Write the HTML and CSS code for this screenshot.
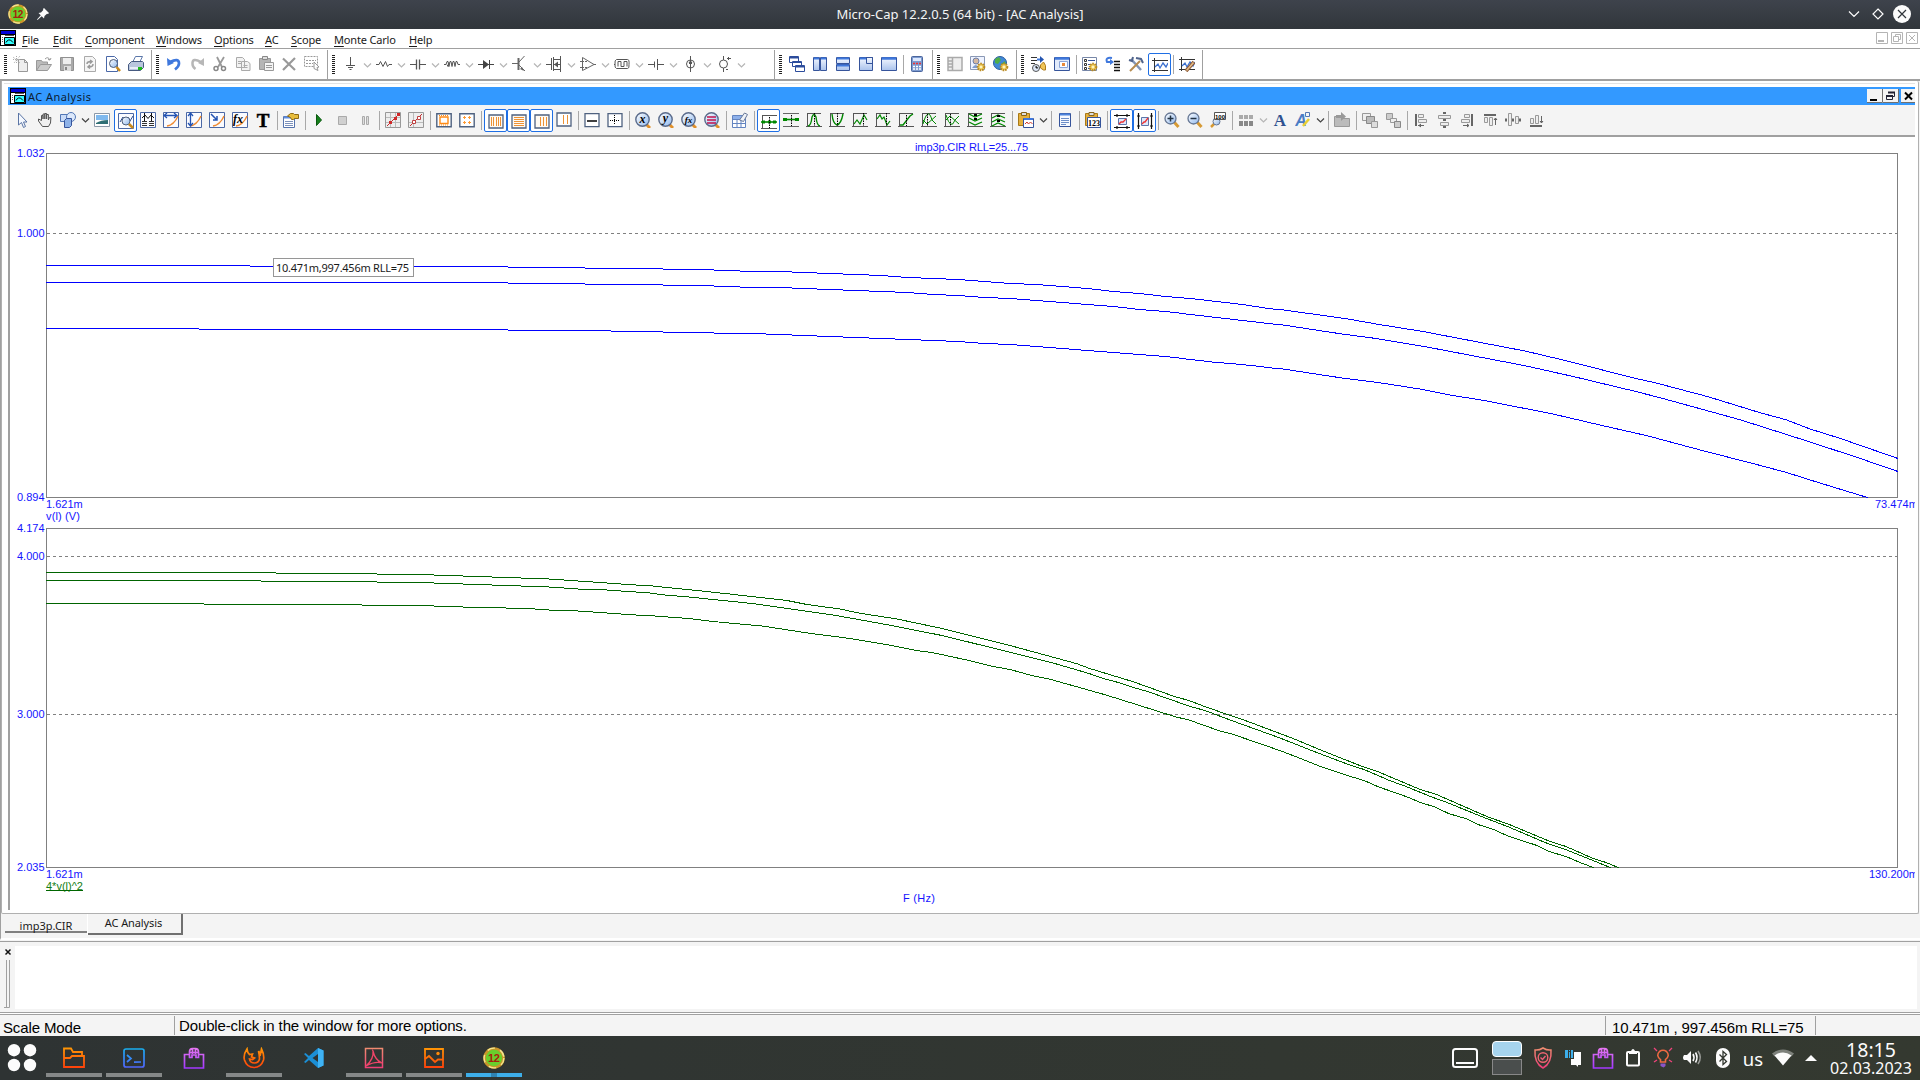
FILE: index.html
```html
<!DOCTYPE html>
<html lang="en">
<head>
<meta charset="utf-8">
<title>Micro-Cap 12.2.0.5 (64 bit) - [AC Analysis]</title>
<link rel="stylesheet" href="styles.css">
</head>
<body>
<svg class="sprite" aria-hidden="true">
<defs>
<linearGradient id="blue" x1="0" y1="0" x2="0" y2="1"><stop offset="0" stop-color="#f4f8ff"/><stop offset="1" stop-color="#a9c2ec"/></linearGradient>
<linearGradient id="lens" x1="0" y1="0" x2="1" y2="1"><stop offset="0" stop-color="#fff"/><stop offset="1" stop-color="#8fb8ee"/></linearGradient>
<linearGradient id="flame" gradientUnits="userSpaceOnUse" x1="0" y1="0" x2="0" y2="22"><stop offset="0" stop-color="#ff9a05"/><stop offset="1" stop-color="#ff3c0a"/></linearGradient>
<linearGradient id="sea" gradientUnits="userSpaceOnUse" x1="0" y1="0" x2="0" y2="22"><stop offset="0" stop-color="#13b5ee"/><stop offset="1" stop-color="#5560ff"/></linearGradient>
<linearGradient id="plum" gradientUnits="userSpaceOnUse" x1="0" y1="0" x2="0" y2="22"><stop offset="0" stop-color="#e97af0"/><stop offset="1" stop-color="#a035ff"/></linearGradient>
<linearGradient id="rose" gradientUnits="userSpaceOnUse" x1="0" y1="0" x2="0" y2="22"><stop offset="0" stop-color="#f09070"/><stop offset="1" stop-color="#ef3a78"/></linearGradient>
<symbol id="app" viewBox="0 0 20 20"><circle cx="10" cy="10" r="8.600" fill="#69cf2c" stroke="#c9952a" stroke-width="2.400"/><circle cx="10" cy="10" r="9" fill="none" stroke="#f3e58f" stroke-width="1.300" stroke-dasharray="7 5"/><text x="9.700" y="13.800" text-anchor="middle" class="app-num">12</text></symbol>
<symbol id="doc" viewBox="0 0 16 16"><path fill="#000" d="M0 0h16v16H0z"/><path fill="#0000d8" d="M1 1h14v3H1z"/><path fill="#fff" d="M1 5h14v10H1z"/><path stroke="#555" d="M2 7.500h1M2 9.500h1M2 11.500h1M5 5.500h9"/><path fill="#3ff" stroke="#000" d="M4.500 7.500h10v7h-10z"/><path d="M6 12.500q1-2 2.500-2.500h2l2.500 2.500" stroke="#000" fill="none"/></symbol>
<symbol id="new" viewBox="0 0 16 16"><path fill="#eee" stroke="#999" d="M5.500 3.500h6l3 3v9h-9z"/><path fill="none" stroke="#999" d="M11.500 3.500v3h3"/><path stroke="#aaa" stroke-dasharray="1 1" d="M0 1l7 6M7 0L1 7M3.500 0v7M0 3.500h7"/></symbol>
<symbol id="open" viewBox="0 0 16 16"><path fill="#bbb" stroke="#999" d="M.500 14.500v-10h5l1 1.500h5v3"/><path fill="#ccc" stroke="#999" d="M.500 14.500l4-6h11l-4 6z"/><path fill="none" stroke="#999" d="M9 3q3-3 5 1l1-2M14 4l-2-.5"/></symbol>
<symbol id="save" viewBox="0 0 16 16"><path fill="#aaa" stroke="#909090" d="M1.500 1.500h13v13h-13z"/><path fill="#eee" d="M4 2h8v6H4z"/><path fill="#ddd" d="M5 10h7v5H5z"/><path fill="#888" d="M6 11h2v3H6z"/></symbol>
<symbol id="reload" viewBox="0 0 16 16"><path fill="#f5f5f5" stroke="#aaa" d="M2.500.500h8l3 3v12h-11z"/><path fill="none" stroke="#999" stroke-width="1.500" d="M5 8q0-2.500 4-2.500M8 4l2 1.500L8 7.500M11 8q0 3-4 3M8 9l-2 2 2 1.500"/></symbol>
<symbol id="preview" viewBox="0 0 16 16"><path fill="#fff" stroke="#4a68a8" d="M1.500.500h8l3 3v12h-11z"/><circle cx="8.500" cy="7.500" r="4" fill="url(#lens)" stroke="#4a5a78"/><path stroke="#c98a1d" stroke-width="2.500" d="M11.500 11l3.500 4"/></symbol>
<symbol id="print" viewBox="0 0 16 16"><path fill="#fff" stroke="#5b77aa" d="M4.500 6.500l3-6h7l-3 6z"/><path fill="#b9c6dd" stroke="#465a80" d="M.500 8.500l3-3h11l1 1v5l-3 3h-12z"/><path fill="#e8eef8" d="M2 11h9v2H2z"/><path fill="#1db81d" d="M10 11h4v3h-4z"/></symbol>
<symbol id="undo" viewBox="0 0 16 16"><path fill="none" stroke="#3f78dd" stroke-width="2.700" d="M4 6q9-4.500 9 1.500 0 3-4 6"/><path fill="#3f78dd" d="M1 2l.500 8 6.500-3z"/></symbol>
<symbol id="redo" viewBox="0 0 16 16"><path fill="none" stroke="#b7b7b7" stroke-width="2.500" d="M12 6Q3 1 3.500 8q0 3 3 5"/><path fill="#b7b7b7" d="M15 2v8L9 7z"/></symbol>
<symbol id="cut" viewBox="0 0 16 16"><path fill="none" stroke="#999" stroke-width="1.800" d="M5 1l5 10M12 1L6 11"/><circle cx="4" cy="12.500" r="2" fill="none" stroke="#888" stroke-width="1.500"/><circle cx="11.500" cy="12.500" r="2" fill="none" stroke="#888" stroke-width="1.500"/></symbol>
<symbol id="copy" viewBox="0 0 16 16"><path fill="#f2f2f2" stroke="#aaa" d="M1.500 1.500h6l2 2v8h-8zM6.500 5.500h6l2.500 2v7H6.500z"/><path stroke="#aaa" d="M3 5.500h3M3 7.500h3M8.500 9.500h4M8.500 11.500h4"/></symbol>
<symbol id="paste" viewBox="0 0 16 16"><path fill="#b5b5b5" stroke="#999" d="M1.500 2.500h11v11h-11z"/><path fill="#ddd" stroke="#888" d="M4.500.500h5v3h-5z"/><path fill="#f4f4f4" stroke="#999" d="M6.500 6.500h9v8h-9z"/><path stroke="#999" d="M8 9.500h6M8 11.500h6"/></symbol>
<symbol id="del" viewBox="0 0 16 16"><path stroke="#999" stroke-width="2.200" d="M2 2.500l12 11.500M14 2L2 14"/></symbol>
<symbol id="sel" viewBox="0 0 16 16"><path fill="none" stroke="#999" stroke-dasharray="2 1" d="M.500.500h13v10H.500zM2 4.500h10M2 7.500h7"/><path fill="#fff" stroke="#999" d="M10 6l5 5-2 .5 1 3-2-1-2-1z"/></symbol>
<symbol id="gnd" viewBox="0 0 16 16"><path stroke="#555" d="M8.500 1v8M4 9.500h9M6 11.500h5M7.500 13.500h2"/></symbol>
<symbol id="res" viewBox="0 0 16 16"><path fill="none" stroke="#555" d="M0 8.500h3l1.500-3 2.500 5 2.500-5 2 5 1.500-2H16"/></symbol>
<symbol id="cap" viewBox="0 0 16 16"><path stroke="#555" d="M0 8.500h6M10 8.500h6"/><path stroke="#555" stroke-width="1.300" d="M6.500 3.500v10M9.500 3.500v10"/></symbol>
<symbol id="ind" viewBox="0 0 16 16"><path fill="none" stroke="#555" d="M0 8.500h2l1-3h1l1 5 1-5h1l1 5 1-5h1l1 5 1-5h1l1 3h2M3 8.500l1 2 1-4"/></symbol>
<symbol id="dio" viewBox="0 0 16 16"><path stroke="#444" d="M0 8.500h16M11.500 4v9"/><path fill="#444" d="M5 4v9l6-4.500z"/></symbol>
<symbol id="npn" viewBox="0 0 16 16"><path fill="none" stroke="#666" d="M0 7.500h6M12.500 0L7 6M7 9l6 6"/><path stroke="#666" stroke-width="2" d="M6.500 2v12"/><path fill="#666" d="M12 15l-4-2 2-2z"/></symbol>
<symbol id="mos" viewBox="0 0 16 16"><path fill="none" stroke="#555" d="M0 8.500h5M5.500 2v12M7.500 1v14M8 3.500h6M8 8.500h6M8 13.500h6M14.500 0v16"/><path fill="#555" d="M8 8.500l4-3v6z"/></symbol>
<symbol id="amp" viewBox="0 0 16 16"><path fill="none" stroke="#666" d="M2.500 1.500v13L14 8.500zM0 5.500h4M0 11.500h4M14 8.500h2M5 5.500h2M5 11.500h2"/></symbol>
<symbol id="pulse" viewBox="0 0 16 16"><path fill="none" stroke="#555" d="M2.500 3.500h11q2 0 1.500 5 .500 4-1.500 4h-11q-2-.500-1.500-4.500-.500-4 1.500-4.500M0 8.500h1M4 10.500v-5h3v5h3v-5h3v5"/></symbol>
<symbol id="bat" viewBox="0 0 16 16"><path stroke="#555" d="M0 8.500h6M10 8.500h6M6.500 5.500v6M9.500 3v11"/></symbol>
<symbol id="isrc" viewBox="0 0 16 16"><circle cx="8.500" cy="8" r="4" fill="none" stroke="#555"/><path stroke="#555" d="M8.500 0v16M7 7l1.500-2L10 7M7 7.500h3"/></symbol>
<symbol id="vsrc" viewBox="0 0 16 16"><circle cx="7.500" cy="8" r="4" fill="none" stroke="#555"/><path stroke="#555" d="M7.500 0v4M7.500 12v4M11 2.500h4M12.500 1v3M10 13.500h2"/></symbol>
<symbol id="cascade" viewBox="0 0 16 16"><g fill="#fff" stroke="#2c4c9c"><path d="M.500.500h9v6h-9zM3.500 5.500h9v5h-9zM6.500 9.500h9v6h-9z"/></g><path stroke="#2c4c9c" stroke-width="2" d="M1 1.500h8M4 6h8M7 10.500h8"/></symbol>
<symbol id="tilev" viewBox="0 0 16 16"><path fill="url(#blue)" stroke="#36549b" d="M1.500 1.500h6v13h-6zM8.500 1.500h6v13h-6z"/><path stroke="#3f78dd" stroke-width="2" d="M2 2.500h5M9 2.500h5"/></symbol>
<symbol id="tileh" viewBox="0 0 16 16"><path fill="url(#blue)" stroke="#36549b" d="M1.500 1.500h13v6h-13zM1.500 8.500h13v6h-13z"/><path stroke="#3f78dd" stroke-width="2" d="M2 2.500h12M2 9.500h12"/></symbol>
<symbol id="tilec" viewBox="0 0 16 16"><path fill="url(#blue)" stroke="#36549b" d="M1.500 1.500h13v13h-13zM8.500 1.500h6v6h-6z"/><path stroke="#3f78dd" stroke-width="2" d="M2 2.500h6"/></symbol>
<symbol id="win" viewBox="0 0 16 16"><path fill="url(#blue)" stroke="#36549b" d="M.500 1.500h15v13H.500z"/><path stroke="#3f78dd" stroke-width="2.500" d="M1 2.500h14"/></symbol>
<symbol id="calc" viewBox="0 0 16 16"><rect x="2.500" y=".5" width="11" height="15" rx="1" fill="#7d9bd0" stroke="#4a659c"/><path fill="#dce8ff" d="M4 2h8v3H4z"/><path stroke="#e33" stroke-width="1.500" stroke-dasharray="2 1" d="M4 7.500h8"/><path stroke="#fff" stroke-width="1.500" stroke-dasharray="2 1" d="M4 10.500h8M4 13h8"/></symbol>
<symbol id="panel" viewBox="0 0 16 16"><path fill="#eee" stroke="#aaa" stroke-width="1.500" d="M1 1.500h14v13H1zM5.500 2v12M1 5h4M1 8h4M1 11h4"/></symbol>
<symbol id="gear" viewBox="0 0 16 16"><circle cx="11" cy="11" r="3.300" fill="#f1cf60" stroke="#ba8a22" stroke-width="2" stroke-dasharray="1.600 .8"/><circle cx="11" cy="11" r="1.300" fill="#fff4c0"/></symbol>
<symbol id="imgcfg" viewBox="0 0 16 16"><path fill="#eef3ff" stroke="#8a98b5" d="M.500.500h14v13H.500z"/><circle cx="6" cy="5" r="3" fill="#d5b8a0" stroke="#6d7ea8"/><path fill="#7d9bd0" d="M2 12q4-6 7 0z"/><use href="#gear"/></symbol>
<symbol id="globe" viewBox="0 0 16 16"><circle cx="7" cy="7" r="6.500" fill="#4088d6" stroke="#2a5c9c"/><path fill="#4fae48" d="M2 3l4-2 2 3-3 4-3-1zM8 8l4-3 1 4-3 4z"/><use href="#gear"/></symbol>
<symbol id="check" viewBox="0 0 16 16"><path fill="#fff" stroke="#7787a8" d="M.500 1.500h14v13H.500z"/><path stroke="#36549b" d="M6 4.500h7M6 8.500h5M6 12.500h3"/><path fill="none" stroke="#333" d="M2.500 3.500h2v2h-2zM2.500 7.500h2v2h-2zM2.500 11.500h2v2h-2z"/><use href="#gear"/></symbol>
<symbol id="anim" viewBox="0 0 16 16"><path stroke="#333" d="M0 1.500h6M0 4.500h6M0 7.500h4"/><path stroke="#3f78dd" stroke-width="2" d="M6 3.500h4"/><path fill="#2454b0" d="M9 0l4 3.500L9 7z"/><circle cx="5" cy="12" r="3.500" fill="#dde8f8" stroke="#555"/><path stroke="#333" d="M5 10v2h2"/><path fill="#efc457" stroke="#ae7c1e" d="M9.500 9l3-3q3 3 2 8h-2l-3-2z"/></symbol>
<symbol id="dlg" viewBox="0 0 16 16"><path fill="#e2ebfb" stroke="#36549b" d="M.500 1.500h15v13H.500z"/><path stroke="#3f78dd" stroke-width="2.500" d="M1 2.500h14"/><path fill="#fff" stroke="#8ba5d8" d="M5.500 5.500h8v6h-8z"/><path fill="#e8893a" d="M8 7h3v3H8z"/></symbol>
<symbol id="step" viewBox="0 0 16 16"><path fill="none" stroke="#3f78dd" stroke-width="2" d="M7 2Q0 1 2 6h4"/><path fill="#3f78dd" d="M5 3l4 3-4 3z"/><path stroke="#111" stroke-width="1.300" d="M9 5.500h6M9 8.500h6M9 11.500h6M9 14.500h6"/></symbol>
<symbol id="tools" viewBox="0 0 16 16"><path stroke="#8295b5" stroke-width="2.500" d="M3 3l10 11"/><path stroke="#b68c50" stroke-width="2" d="M12 5L2 15"/><path fill="none" stroke="#50648c" stroke-width="2" d="M8 2l5 1 2 4M1 4l3 1 1-4"/></symbol>
<symbol id="wave" viewBox="0 0 16 16"><path stroke="#333" d="M2.500 1v14M0 3.500h16M0 13.500h16"/><path fill="none" stroke="#3b70d0" stroke-width="1.300" d="M3 10l3-3 2 4 3-5 3 4 2-4"/></symbol>
<symbol id="waveed" viewBox="0 0 16 16"><use href="#wave"/><path stroke="#8a5530" stroke-width="3.600" d="M7 15l8-9"/><path stroke="#e2bd8c" stroke-width="1.600" d="M7.500 14.500l7-8"/></symbol>
<symbol id="arrow" viewBox="0 0 16 16"><path fill="#f4f8ff" stroke="#5a74a4" d="M4.500 1v12l3-2.500 2 5 2-1-2-4.500H13z"/></symbol>
<symbol id="hand" viewBox="0 0 16 16"><path fill="#f0f0f0" stroke="#555" d="M5.500 14.500L1.500 9V7l3 1.500V3.500h1.500V7 2h1.800v5V1.500h1.800V7 2.500h1.800V8l1-2.500h1.500L13.500 11l-2 3.500z"/></symbol>
<symbol id="shapes" viewBox="0 0 16 16"><path fill="#cadbf7" stroke="#5277b5" d="M.500 2.500h8v7h-8z"/><circle cx="11" cy="5" r="4.500" fill="#dce8fb" stroke="#5277b5"/><path fill="#8eb2e8" stroke="#36549b" d="M4.500 8.500l2-2h5v7l-2 2h-5z"/></symbol>
<symbol id="pic" viewBox="0 0 16 16"><path fill="#fff" stroke="#8b98a8" d="M.500 1.500h15v13H.500z"/><path fill="#7fb9ee" d="M2 3h12v5H2z"/><path fill="#2f6f74" d="M2 11Q7 8 14 8v4H2z"/></symbol>
<symbol id="frame" viewBox="0 0 16 16"><path fill="#fafbff" stroke="#4b68a5" d="M.500.500h15v15H.500z"/></symbol>
<symbol id="scale" viewBox="0 0 16 16"><use href="#frame"/><path fill="none" stroke="#2a4c90" d="M2 9l3-5 2 4M10 4l2 4 3-5"/><circle cx="8" cy="8" r="4" fill="url(#lens)" stroke="#50607c"/><path stroke="#c98a1d" stroke-width="2.500" d="M11 11l4 4"/></symbol>
<symbol id="curs" viewBox="0 0 16 16"><use href="#frame"/><path fill="none" stroke="#111" d="M2 6l3-3 3 3.500L11 3l3 3M4.500 1v8M11.500 1v8"/><path stroke="#333" d="M2 9.500h5M9 9.500h5M2 11.500h5M9 11.500h5M2 13.500h5M9 13.500h5"/></symbol>
<symbol id="orange" viewBox="0 0 16 16"><use href="#frame"/><path fill="none" stroke="#ee8a32" stroke-width="1.400" d="M4 14q7-1 11-10"/></symbol>
<symbol id="hz" viewBox="0 0 16 16"><use href="#orange"/><path stroke="#2353b2" stroke-width="1.300" d="M1 3.500h13M4 1L1 3.500 4 6M11 1l3 2.500L11 6" fill="none"/></symbol>
<symbol id="vt" viewBox="0 0 16 16"><use href="#orange"/><path stroke="#2353b2" stroke-width="1.300" d="M4.500 1v13M2 4l2.500-3L7 4M2 11l2.500 3L7 11" fill="none"/></symbol>
<symbol id="pt" viewBox="0 0 16 16"><use href="#orange"/><path stroke="#2353b2" stroke-width="1.500" fill="none" d="M2 2l6 6M8 4v4H4"/></symbol>
<symbol id="fx" viewBox="0 0 16 16"><use href="#orange"/><text x="1" y="11" class="t-fx">fx</text></symbol>
<symbol id="T" viewBox="0 0 16 16"><text x="8" y="14.500" text-anchor="middle" class="t-T">T</text></symbol>
<symbol id="props" viewBox="0 0 16 16"><path fill="#fff" stroke="#5674ad" d="M.500 4.500h11v11h-11z"/><path stroke="#5f8de0" stroke-width="2" d="M1 5.500h10"/><path stroke="#7c91bb" d="M2 9.500h8M2 11.500h8M2 13.500h8"/><path fill="#e6bc3c" stroke="#8f6a12" d="M4.500 4l3-2.500h3l1 1h4v4h-4l-1 1h-2l-1-2z"/></symbol>
<symbol id="play" viewBox="0 0 16 16"><path fill="#16801b" stroke="#0a5a10" d="M5.500 2.500v11l5-5.500z"/></symbol>
<symbol id="stop" viewBox="0 0 16 16"><path fill="#d0d0d0" stroke="#aaa" d="M4.500 4.500h8v8h-8z"/></symbol>
<symbol id="pause" viewBox="0 0 16 16"><path fill="#ddd" stroke="#aaa" d="M5.500 4.500h2v8h-2zM9.500 4.500h2v8h-2z"/></symbol>
<symbol id="pts" viewBox="0 0 16 16"><path fill="#eee" stroke="#999" d="M.500.500h15v15H.500z"/><path stroke="#bbb" d="M5.500 1v14M1 10.500h14M10.500 1v14M1 5.500h14"/><path stroke="#c03030" d="M2 14L14 2"/><path fill="#d02828" d="M4 9h3v3H4zM9 5h3v3H9zM12 1h3v3h-3z"/></symbol>
<symbol id="ptso" viewBox="0 0 16 16"><path fill="#eee" stroke="#999" d="M.500.500h15v15H.500z"/><path stroke="#bbb" d="M5.500 1v14M1 10.500h14"/><path stroke="#c03030" d="M2 14L14 2"/><path fill="#fff" stroke="#c04040" d="M4.500 8.500h3v3h-3zM9.500 4.500h3v3h-3z"/></symbol>
<symbol id="box1" viewBox="0 0 16 16"><path fill="#fff" stroke="#4f6280" stroke-width="1.400" d="M.800 1.800h14.400v12.900H.800z"/><path fill="#fff" stroke="#ff8b16" stroke-width="1.400" d="M4 5h8v6.500H4z"/><path stroke="#ff8b16" stroke-dasharray="1 1" d="M3 3.500h10M3 13h10"/></symbol>
<symbol id="box2" viewBox="0 0 16 16"><path fill="#fff" stroke="#4f6280" stroke-width="1.400" d="M.800 1.800h14.400v12.900H.800z"/><path stroke="#ff9a33" d="M4 5.500h3M5.500 4v3M9 5.500h3M10.500 4v3M4 10.500h3M5.500 9v3M9 10.500h3M10.500 9v3"/></symbol>
<symbol id="bv" viewBox="0 0 16 16"><path fill="#fffaf2" stroke="#4f6280" stroke-width="1.300" d="M1 2h14v13H1z"/><path stroke="#ee9235" d="M3.500 4v9M5.500 4v9M8.500 4v9M10.500 4v9M12.500 4v9"/></symbol>
<symbol id="bh" viewBox="0 0 16 16"><path fill="#fffaf2" stroke="#4f6280" stroke-width="1.300" d="M1 2h14v13H1z"/><path stroke="#ee9235" d="M3 4.500h10M3 6.500h10M3 8.500h10M3 10.500h10M3 12.500h10"/></symbol>
<symbol id="bm" viewBox="0 0 16 16"><path fill="#fffaf2" stroke="#4f6280" stroke-width="1.300" d="M1 2h14v13H1z"/><path stroke="#ee9235" d="M6.500 4v9M9.500 4v9M12.500 4v9"/></symbol>
<symbol id="bn" viewBox="0 0 16 16"><path fill="#fff" stroke="#4f6280" stroke-width="1.300" d="M1 1h14v13H1z"/><path stroke="#ee9235" d="M7.500 3v9M11.500 3v9"/></symbol>
<symbol id="bl" viewBox="0 0 16 16"><path fill="#fff" stroke="#4f6280" stroke-width="1.300" d="M1 1.700h14v13H1z"/><path stroke="#000" stroke-width="1.500" d="M3 9h10"/></symbol>
<symbol id="bx" viewBox="0 0 16 16"><path fill="#fff" stroke="#4f6280" stroke-width="1.300" d="M1 1.700h14v13H1z"/><path stroke="#000" stroke-dasharray="1 1" d="M3 8.500h10M7.500 3v10"/></symbol>
<symbol id="mag" viewBox="0 0 16 16"><path stroke="#e0902b" stroke-width="3" d="M11 12l4 4"/><circle cx="7.500" cy="7.500" r="6.700" fill="url(#lens)" stroke="#5a6b8b" stroke-width="1.400"/></symbol>
<symbol id="mx" viewBox="0 0 16 16"><use href="#mag"/><text x="7.500" y="11" text-anchor="middle" class="t-m">x</text></symbol>
<symbol id="my" viewBox="0 0 16 16"><use href="#mag"/><text x="7.500" y="10" text-anchor="middle" class="t-m">y</text></symbol>
<symbol id="mf" viewBox="0 0 16 16"><use href="#mag"/><text x="7.500" y="11" text-anchor="middle" class="t-f">fx</text></symbol>
<symbol id="ml" viewBox="0 0 16 16"><use href="#mag"/><path stroke="#c3124c" stroke-width="1.600" d="M3 5h9M3 8h9M3 11h9"/></symbol>
<symbol id="clear" viewBox="0 0 16 16"><path fill="#fff" stroke="#6384c0" d="M.500 3.500h13v12H.500zM.500 7.500h13M.500 11.500h13M5 4v11M9 4v11"/><path fill="#8db0ea" d="M1 4h12v3H1z"/><path fill="#eef2f8" stroke="#697998" d="M7.500 8l5-7 3 1.500-4 7z"/></symbol>
<symbol id="ax" viewBox="0 0 16 16"><path fill="none" stroke="#555" d="M1.500 1v14M0 14.500h16M1 1.500h14"/></symbol>
<symbol id="g1" viewBox="0 0 16 16"><path fill="none" stroke="#555" d="M1.500 2v14M0 15.500h16M1 2.500h15"/><path stroke="#080" stroke-width="1.600" d="M0 9h16"/><path fill="#080" d="M1 7.500h3v3H1zM12 7.500h3v3h-3zM7 7.500h3v3H7z"/><path stroke="#000" stroke-dasharray="1.500 1" d="M8.500 4v11"/></symbol>
<symbol id="g2" viewBox="0 0 16 16"><path stroke="#666" d="M0 1.500h16M0 14.500h16"/><path stroke="#080" stroke-width="1.600" d="M0 7.500h16"/><path fill="#080" d="M0 6h4v3H0zM12 6h4v3h-4z"/><path stroke="#000" stroke-dasharray="1.500 1" d="M8.500 3v11"/></symbol>
<symbol id="g3" viewBox="0 0 16 16"><use href="#ax"/><path fill="none" stroke="#080" stroke-width="1.400" d="M2 14q3 0 4-9 2-5 4 0 1 9 4 9"/><path stroke="#000" stroke-dasharray="1.500 1" d="M8.500 1v13"/></symbol>
<symbol id="g4" viewBox="0 0 16 16"><use href="#ax"/><path fill="none" stroke="#080" stroke-width="1.400" d="M3 2q1 10 5 11 4-1 6-11"/><path stroke="#000" stroke-dasharray="1.500 1" d="M8.500 1v13"/></symbol>
<symbol id="g5" viewBox="0 0 16 16"><use href="#ax"/><path fill="none" stroke="#080" stroke-width="1.200" d="M2 12l3-4 3 4 4-9 3 5"/><path stroke="#000" stroke-dasharray="1.500 1" d="M11.500 1v13"/></symbol>
<symbol id="g6" viewBox="0 0 16 16"><use href="#ax"/><path fill="none" stroke="#080" stroke-width="1.200" d="M2 7l3-4 2 4 2-2 3 8 3-4"/><path stroke="#000" stroke-dasharray="1.500 1" d="M11.500 1v13"/></symbol>
<symbol id="g7" viewBox="0 0 16 16"><use href="#ax"/><path fill="none" stroke="#080" stroke-width="1.400" d="M2 13h3l7-9 3-2"/><path stroke="#000" stroke-dasharray="1.500 1" d="M8.500 3v11"/></symbol>
<symbol id="g8" viewBox="0 0 16 16"><use href="#ax"/><path fill="none" stroke="#080" d="M2 12q5-18 9-4l4 4M2 8l4 4 9-8"/><path stroke="#000" stroke-dasharray="1.500 1" d="M6.500 2v12"/></symbol>
<symbol id="g9" viewBox="0 0 16 16"><use href="#ax"/><path fill="none" stroke="#080" d="M2 3q5 16 9 5l4-4M2 8l4-4 9 8"/><path stroke="#000" stroke-dasharray="1.500 1" d="M6.500 2v12"/></symbol>
<symbol id="g10" viewBox="0 0 16 16"><use href="#ax"/><path fill="none" stroke="#080" stroke-width="1.200" d="M2 2l6 3 7-3M2 6l6 3 7-3M2 10l6 3 7-3"/><path fill="#000" d="M7 2h3v2H7zM7 6h3v2H7z"/></symbol>
<symbol id="g11" viewBox="0 0 16 16"><use href="#ax"/><path fill="none" stroke="#080" stroke-width="1.200" d="M2 6l6-3 7 3M2 10l6-3 7 3M2 14l6-3 7 3"/><path fill="#000" d="M7 3h3v2H7zM7 8h3v2H7z"/></symbol>
<symbol id="cpaste" viewBox="0 0 16 16"><path fill="#e5b03c" stroke="#a87918" d="M.500 1.500h11v12H.500z"/><path fill="#ddd" stroke="#876318" d="M3.500.500h5v3h-5z"/><path fill="#fff" stroke="#36549b" d="M5.500 6.500h10v9h-10z"/><path stroke="#3f78dd" stroke-width="2" d="M6 7h9"/><path fill="none" stroke="#d03a28" d="M7 12l2-2 1.500 2 2-2 2 2"/></symbol>
<symbol id="list" viewBox="0 0 16 16"><path fill="#f6f9ff" stroke="#36549b" d="M2.500 1.500h11v13h-11z"/><path stroke="#4c83dc" stroke-width="2" d="M3 2.500h10"/><path stroke="#6d8ec8" d="M4 6.500h8M4 8.500h8M4 10.500h8M4 12.500h5"/></symbol>
<symbol id="c123" viewBox="0 0 16 16"><path fill="#e5b03c" stroke="#a87918" d="M.500 1.500h12v12H.500z"/><path fill="#ddd" stroke="#876318" d="M4 .500h5v3H4z"/><path fill="#fff" stroke="#36549b" d="M2.500 5.500h13v10h-13z"/><text x="9" y="14" text-anchor="middle" class="t-n">123</text></symbol>
<symbol id="fith" viewBox="0 0 16 16"><path stroke="#111" stroke-width="1.200" d="M0 2.500h16M0 14.500h16M3 1v3M13 1v3M3 13v3M13 13v3"/><path fill="#dfe9fb" stroke="#5d76ab" d="M4.500 5.500h8v6h-8z"/><path fill="none" stroke="#e33" stroke-width="1.300" d="M5 11l2-2h2l3-3"/></symbol>
<symbol id="fitv" viewBox="0 0 16 16"><path stroke="#111" stroke-width="1.200" d="M1.500 0v16M14.500 0v16M0 3h3M0 13h3M13 3h3M13 13h3"/><path fill="#dfe9fb" stroke="#5d76ab" d="M4.500 4.500h7v8h-7z"/><path fill="none" stroke="#e33" stroke-width="1.300" d="M5 11l2-2h1l3-4"/></symbol>
<symbol id="zoom" viewBox="0 0 16 16"><path stroke="#d69a35" stroke-width="3" d="M10 10l4.500 5"/><circle cx="6.500" cy="6.500" r="5.500" fill="url(#lens)" stroke="#657693" stroke-width="1.300"/></symbol>
<symbol id="zin" viewBox="0 0 16 16"><use href="#zoom"/><path stroke="#234" stroke-width="1.500" d="M3.500 6.500h6M6.500 3.500v6"/></symbol>
<symbol id="zout" viewBox="0 0 16 16"><use href="#zoom"/><path stroke="#234" stroke-width="1.500" d="M3.500 6.500h6"/></symbol>
<symbol id="z100" viewBox="0 0 16 16"><path stroke="#d69a35" stroke-width="2.500" d="M4 12l-3 3"/><circle cx="6.500" cy="9.500" r="3.500" fill="url(#lens)" stroke="#657693"/><path fill="#fff" stroke="#555" d="M4.500.500h11v7h-11z"/><text x="10" y="6.500" text-anchor="middle" class="t-z">100</text></symbol>
<symbol id="grid" viewBox="0 0 16 16"><path fill="#aaa" d="M1 3h4v4H1zM6 3h4v4H6zM11 3h4v4h-4z"/><path fill="#888" d="M1 9h4v5H1zM6 9h4v5H6zM11 9h4v5h-4z"/></symbol>
<symbol id="A" viewBox="0 0 16 16"><text x="8" y="13.500" text-anchor="middle" class="t-A">A</text></symbol>
<symbol id="Aed" viewBox="0 0 16 16"><text x="6" y="13.500" text-anchor="middle" class="t-B">A</text><path fill="none" stroke="#5277b5" d="M10.500.500h4v4h-4z"/><path stroke="#e8cf35" stroke-width="2.500" d="M8 14l6-7"/></symbol>
<symbol id="gout" viewBox="0 0 16 16"><path fill="#bbb" stroke="#999" d="M.500 4.500h5l2 2h8v8H.500z"/><path fill="#999" d="M2 3h5V0l5 4.500L7 9V6H2z"/></symbol>
<symbol id="front" viewBox="0 0 16 16"><path fill="#eee" stroke="#999" d="M.500 1.500h8v7h-8z"/><path fill="#bbb" stroke="#888" d="M4.500 4.500h8v7h-8z"/><path fill="#ddd" stroke="#999" d="M9.500 9.500h6v6h-6z"/></symbol>
<symbol id="back" viewBox="0 0 16 16"><path fill="#ccc" stroke="#999" d="M1.500 1.500h6v6h-6z"/><path fill="#eee" stroke="#999" d="M5.500 6.500h6v4h-6z"/><path fill="#ccc" stroke="#888" d="M9.500 9.500h6v6h-6z"/></symbol>
<symbol id="al" viewBox="0 0 16 16"><path stroke="#666" stroke-width="2" d="M3 2v12"/><path fill="#eee" stroke="#999" d="M5.500 2.500h5v3h-5zM5.500 7.500h8v3h-8z"/><path stroke="#666" d="M5 13.500h6M8 12l-2 1.500L8 15"/></symbol>
<symbol id="ac" viewBox="0 0 16 16"><path stroke="#666" stroke-width="3" stroke-dasharray="2 5" d="M8.500 0v16"/><path fill="#eee" stroke="#999" d="M2.500 3.500h12v3h-12zM4.500 10.500h8v3h-8z"/></symbol>
<symbol id="ar" viewBox="0 0 16 16"><path stroke="#666" stroke-width="2" d="M13 2v12"/><path fill="#eee" stroke="#999" d="M5.500 2.500h5v3h-5zM2.500 7.500h8v3h-8z"/><path stroke="#666" d="M4 13.500h6M8 12l2 1.500L8 15"/></symbol>
<symbol id="at" viewBox="0 0 16 16"><path stroke="#666" stroke-width="2" d="M2 3h12"/><path fill="#eee" stroke="#999" d="M2.500 5.500h3v5h-3zM7.500 5.500h3v8h-3z"/><path stroke="#666" d="M13.500 6v7M12 8l1.500-2L15 8"/></symbol>
<symbol id="am" viewBox="0 0 16 16"><path stroke="#666" stroke-width="3" stroke-dasharray="2 5" d="M0 8h16"/><path fill="#eee" stroke="#999" d="M3.500 1.500h3v12h-3zM10.500 4.500h3v7h-3z"/></symbol>
<symbol id="ab" viewBox="0 0 16 16"><path stroke="#666" stroke-width="2" d="M2 14h12"/><path fill="#eee" stroke="#999" d="M2.500 6.500h3v5h-3zM7.500 3.500h3v8h-3z"/><path stroke="#666" d="M13.500 4v7M12 9l1.500 2L15 9"/></symbol>
<symbol id="cv" viewBox="0 0 11 16"><path fill="none" stroke="#b5b5b5" stroke-width="1.200" d="M2 6.500L5.500 10 9 6.500"/></symbol>
<symbol id="cvd" viewBox="0 0 11 16"><path fill="none" stroke="#444" stroke-width="1.200" d="M2 6.500L5.500 10 9 6.500"/></symbol>
<symbol id="bag" viewBox="0 0 22 22"><g fill="none" stroke="url(#plum)" stroke-width="1.700"><path d="M6 7.500H1.500V21h19V7.500H16M6.500 10.500V5q0-3.500 3-3.500h3q3 0 3 3.500v5.500H13V8H9v2.500zM9.500 2v5M12.500 2v5M7 5.500h8"/></g></symbol>
</defs>
</svg>

<header class="titlebar">
  <svg class="t-app" viewBox="0 0 20 20"><use href="#app"/></svg>
  <svg class="t-pin" viewBox="0 0 12 12"><path fill="#fcfcfc" d="M7 0l5 5-1 1-1-.3L7.500 8 7 10.500 4.700 8.200.5 12 0 11.500l3.800-4.200L1.500 5 4 4.500 6.300 2 6 1z"/></svg>
  <h1>Micro-Cap 12.2.0.5 (64 bit) - [AC Analysis]</h1>
  <svg class="t-ctl" viewBox="0 0 70 20"><g fill="none" stroke="#fcfcfc" stroke-width="1.200"><path d="M5 7.500l5 5 5-5M34 5l5 5-5 5-5-5z"/></g><circle cx="58" cy="10" r="9" fill="#fcfcfc"/><path stroke="#31363b" stroke-width="1.200" d="M54 6l8 8M62 6l-8 8"/></svg>
</header>

<nav class="menubar">
  <svg class="doc" viewBox="0 0 16 16"><use href="#doc"/></svg>
  <ul>
    <li class="m1"><u>F</u>ile</li><li class="m2"><u>E</u>dit</li><li class="m3"><u>C</u>omponent</li><li class="m4"><u>W</u>indows</li><li class="m5"><u>O</u>ptions</li><li class="m6"><u>A</u>C</li><li class="m7"><u>S</u>cope</li><li class="m8"><u>M</u>onte Carlo</li><li><u>H</u>elp</li>
  </ul>
  <div class="mdi-ctl"><svg viewBox="0 0 42 12"><g fill="none" stroke="#b4b4b4"><path d="M.500.500h11v11H.500zM15.500.500h11v11h-11zM30.500.500h11v11h-11z"/><path stroke-width="2" d="M2 9h6"/><path d="M17.500 4.500h5v5h-5zM19.500 4.500v-2h5v5h-2M33 3l6 6M39 3l-6 6"/></g></svg></div>
</nav>

<div class="toolbar main">
  <div class="seg s1"><i class="grip"></i><svg class="i"><use href="#new"/></svg><svg class="i"><use href="#open"/></svg><svg class="i"><use href="#save"/></svg><svg class="i"><use href="#reload"/></svg><svg class="i"><use href="#preview"/></svg><svg class="i"><use href="#print"/></svg></div>
  <div class="seg s2"><i class="grip"></i><svg class="i"><use href="#undo"/></svg><svg class="i"><use href="#redo"/></svg><svg class="i"><use href="#cut"/></svg><svg class="i"><use href="#copy"/></svg><svg class="i"><use href="#paste"/></svg><svg class="i"><use href="#del"/></svg><svg class="i"><use href="#sel"/></svg></div>
  <div class="seg s3"><i class="grip"></i><svg class="i"><use href="#gnd"/></svg><svg class="c"><use href="#cv"/></svg><svg class="i"><use href="#res"/></svg><svg class="c"><use href="#cv"/></svg><svg class="i"><use href="#cap"/></svg><svg class="c"><use href="#cv"/></svg><svg class="i"><use href="#ind"/></svg><svg class="c"><use href="#cv"/></svg><svg class="i"><use href="#dio"/></svg><svg class="c"><use href="#cv"/></svg><svg class="i"><use href="#npn"/></svg><svg class="c"><use href="#cv"/></svg><svg class="i"><use href="#mos"/></svg><svg class="c"><use href="#cv"/></svg><svg class="i"><use href="#amp"/></svg><svg class="c"><use href="#cv"/></svg><svg class="i"><use href="#pulse"/></svg><svg class="c"><use href="#cv"/></svg><svg class="i"><use href="#bat"/></svg><svg class="c"><use href="#cv"/></svg><svg class="i"><use href="#isrc"/></svg><svg class="c"><use href="#cv"/></svg><svg class="i"><use href="#vsrc"/></svg><svg class="c"><use href="#cv"/></svg></div>
  <div class="seg s4"><i class="grip"></i><svg class="i"><use href="#cascade"/></svg><svg class="i"><use href="#tilev"/></svg><svg class="i"><use href="#tileh"/></svg><svg class="i"><use href="#tilec"/></svg><svg class="i"><use href="#win"/></svg><i class="sep"></i><svg class="i"><use href="#calc"/></svg></div>
  <div class="seg s5"><i class="grip"></i><svg class="i"><use href="#panel"/></svg><svg class="i"><use href="#imgcfg"/></svg><svg class="i"><use href="#globe"/></svg></div>
  <div class="seg s6"><i class="grip"></i><svg class="i"><use href="#anim"/></svg><svg class="i"><use href="#dlg"/></svg><i class="sep"></i><svg class="i"><use href="#check"/></svg><svg class="i"><use href="#step"/></svg><svg class="i"><use href="#tools"/></svg><svg class="i on"><use href="#wave"/></svg><i class="sep"></i><svg class="i"><use href="#waveed"/></svg></div>
</div>

<main class="mdi">
  <section class="window">
    <div class="caption"><svg class="doc" viewBox="0 0 16 16"><use href="#doc"/></svg><h2>AC Analysis</h2>
      <svg class="cap-ctl" viewBox="0 0 48 14"><path fill="#f4f4f4" d="M0 0h16v14H0zM16 0h16v14H16zM34 0h14v14H34z"/><path fill="none" stroke="#707070" d="M0 13.500h15.500V0M16 13.500h15.500V0M34 13.500h14"/><path fill="none" stroke="#000" stroke-width="2" d="M3 11h7M38 3.500l7 7M45 3.500l-7 7"/><path fill="#f4f4f4" stroke="#223" d="M21.500 4v-.500h6v4h-2M19.500 6.500h6v4h-6z"/><path stroke="#223" stroke-width="2" d="M21 3.500h7M19 7h7"/></svg>
    </div>
    <div class="toolbar local">
      <svg class="i"><use href="#arrow"/></svg><svg class="i"><use href="#hand"/></svg><svg class="i"><use href="#shapes"/></svg><svg class="c"><use href="#cvd"/></svg><svg class="i"><use href="#pic"/></svg><svg class="i on"><use href="#scale"/></svg><svg class="i"><use href="#curs"/></svg><svg class="i"><use href="#hz"/></svg><svg class="i"><use href="#vt"/></svg><svg class="i"><use href="#pt"/></svg><svg class="i"><use href="#fx"/></svg><svg class="i"><use href="#T"/></svg><i class="sep"></i><svg class="i"><use href="#props"/></svg><i class="sep"></i><svg class="i"><use href="#play"/></svg><svg class="i"><use href="#stop"/></svg><svg class="i"><use href="#pause"/></svg><i class="sep"></i><svg class="i"><use href="#pts"/></svg><svg class="i"><use href="#ptso"/></svg><i class="sep"></i><svg class="i"><use href="#box1"/></svg><svg class="i"><use href="#box2"/></svg><i class="sep"></i><svg class="i on"><use href="#bv"/></svg><svg class="i on"><use href="#bh"/></svg><svg class="i on"><use href="#bm"/></svg><svg class="i"><use href="#bn"/></svg><i class="sep"></i><svg class="i"><use href="#bl"/></svg><svg class="i"><use href="#bx"/></svg><i class="sep"></i><svg class="i"><use href="#mx"/></svg><svg class="i"><use href="#my"/></svg><svg class="i"><use href="#mf"/></svg><svg class="i"><use href="#ml"/></svg><i class="sep"></i><svg class="i"><use href="#clear"/></svg><i class="sep"></i><svg class="i on"><use href="#g1"/></svg><svg class="i"><use href="#g2"/></svg><svg class="i"><use href="#g3"/></svg><svg class="i"><use href="#g4"/></svg><svg class="i"><use href="#g5"/></svg><svg class="i"><use href="#g6"/></svg><svg class="i"><use href="#g7"/></svg><svg class="i"><use href="#g8"/></svg><svg class="i"><use href="#g9"/></svg><svg class="i"><use href="#g10"/></svg><svg class="i"><use href="#g11"/></svg><i class="sep"></i><svg class="i"><use href="#cpaste"/></svg><svg class="c"><use href="#cvd"/></svg><i class="sep"></i><svg class="i"><use href="#list"/></svg><i class="sep"></i><svg class="i"><use href="#c123"/></svg><i class="sep"></i><svg class="i on"><use href="#fith"/></svg><svg class="i on"><use href="#fitv"/></svg><i class="sep"></i><svg class="i"><use href="#zin"/></svg><svg class="i"><use href="#zout"/></svg><svg class="i"><use href="#z100"/></svg><i class="sep"></i><svg class="i"><use href="#grid"/></svg><svg class="c"><use href="#cv"/></svg><svg class="i"><use href="#A"/></svg><svg class="i"><use href="#Aed"/></svg><svg class="c"><use href="#cvd"/></svg><i class="sep"></i><svg class="i"><use href="#gout"/></svg><i class="sep"></i><svg class="i"><use href="#front"/></svg><svg class="i"><use href="#back"/></svg><i class="sep"></i><svg class="i"><use href="#al"/></svg><svg class="i"><use href="#ac"/></svg><svg class="i"><use href="#ar"/></svg><svg class="i"><use href="#at"/></svg><svg class="i"><use href="#am"/></svg><svg class="i"><use href="#ab"/></svg>
    </div>
    <div class="plots">
      <svg class="chart" viewBox="10 137 1905 773">
        <g class="axes"><path d="M46.500 153.500H1897.500V497.500H46.500zM46.500 528.500H1897.500V867.500H46.500z"/><path class="dash" d="M47 233.500H1897M47 556.500H1897M47 714.500H1897"/></g>
        <g class="trace v">
          <path d="M46 265.500H250M250 266.500H508M508 267.500H585M585 268.500H663M663 269.500H714M714 270.500H740M740 271.500H792M792 272.500H817M817 273.500H843M843 274.500H869M869 275.500H888M888 276.500H901M901 277.500H921M921 278.500H946M946 279.500H965M965 280.500H978M978 281.500H991M991 282.500H1004M1004 283.500H1024M1024 284.500H1043M1043 285.500H1056M1056 286.500H1069M1069 287.500H1081M1081 288.500H1092M1092 289.500H1101M1101 290.500H1109M1109 291.500H1120M1120 292.500H1133M1133 293.500H1144M1144 294.500H1153M1153 295.500H1161M1161 296.500H1172M1172 297.500H1184M1184 298.500H1195M1195 299.500H1204M1204 300.500H1212M1212 301.500H1221M1221 302.500H1230M1230 303.500H1238M1238 304.500H1246M1246 305.500H1252M1252 306.500H1259M1259 307.500H1265M1265 308.500H1273M1273 309.500H1280L1345 318.500 1378 324.300 1423 331.500 1492 344.700 1525 351 1566 360.700 1635 378.300 1655 382.700 1708 396.700 1761 413 1786 419.700 1810 429 1839 438 1898 458.500"/>
          <path d="M46 282.500H508M508 283.500H585M585 284.500H663M663 285.500H714M714 286.500H740M740 287.500H792M792 288.500H817M817 289.500H843M843 290.500H869M869 291.500H895M895 292.500H914M914 293.500H927M927 294.500H946M946 295.500H965M965 296.500H978M978 297.500H998M998 298.500H1017M1017 299.500H1030M1030 300.500H1043M1043 301.500H1056M1056 302.500H1069M1069 303.500H1081M1081 304.500H1094M1094 305.500H1107M1107 306.500H1118M1118 307.500H1127M1127 308.500H1135M1135 309.500H1146M1146 310.500H1159M1159 311.500H1170M1170 312.500H1179M1179 313.500H1186M1186 314.500H1195M1195 315.500H1204M1204 316.500H1212M1212 317.500H1221M1221 318.500H1230M1230 319.500H1238M1238 320.500H1247M1247 321.500H1256M1256 322.500H1264M1264 323.500H1273M1273 324.500H1280L1342 334 1374 338.200 1427 347 1525 365.700 1574 376.700 1635 391.300 1660 397.700 1741 420 1810 442 1855 456.700 1898 471.500"/>
          <path d="M46 328.500H199M199 329.500H508M508 330.500H611M611 331.500H663M663 332.500H714M714 333.500H766M766 334.500H792M792 335.500H817M817 336.500H843M843 337.500H869M869 338.500H895M895 339.500H921M921 340.500H946M946 341.500H965M965 342.500H978M978 343.500H998M998 344.500H1017M1017 345.500H1030M1030 346.500H1043M1043 347.500H1056M1056 348.500H1069M1069 349.500H1081M1081 350.500H1094M1094 351.500H1107M1107 352.500H1120M1120 353.500H1133M1133 354.500H1146M1146 355.500H1159M1159 356.500H1170M1170 357.500H1179M1179 358.500H1186M1186 359.500H1195M1195 360.500H1204M1204 361.500H1212M1212 362.500H1224M1224 363.500H1236M1236 364.500H1246M1246 365.500H1256M1256 366.500H1264M1264 367.500H1272M1272 368.500H1280L1342 378 1378 382.500 1423 389.500 1447 394.500 1484 400.500 1525 408.500 1553 414 1602 425.500 1647 435.700 1704 451 1749 462.500 1786 472.300 1815 481.500 1868 497.700"/>
        </g>
        <g class="trace g">
          <path d="M46 572.500H276M276 573.500H377M377 574.500H434M434 575.500H463M463 576.500H492M492 577.500H521M521 578.500H549M549 579.500H564M564 580.500H578M578 581.500H593M593 582.500H607M607 583.500H621M621 584.500H636M636 585.500H648L665 587.300 705 591.300 734 594.500 787 600.500 807 604.500 840 609 860 613.300 897 619 942 628.500 1007 644.700 1077 663.700 1089 668.300 1134 682 1175 696.700 1189 700.500 1205 706.700 1248 721.500 1280 733.600 1292 738 1317 748.500 1361 766 1378 771.700 1419 789 1437 794.700 1488 817 1508 824 1549 841 1566 846.500 1592 858 1606 862.500 1619 867.800"/>
          <path d="M46 580.500H261M261 581.500H377M377 582.500H434M434 583.500H463M463 584.500H492M492 585.500H521M521 586.500H549M549 587.500H564M564 588.500H578M578 589.500H607M607 590.500H621M621 591.500H636M636 592.500H646L665 595 689 597 754 603.700 836 615.500 889 625 942 635.500 1007 651.500 1052 662.700 1089 673.500 1105 679 1115 681.500 1134 687.700 1146 691 1191 706.700 1205 710.500 1232 720.700 1280 738 1312 750.700 1349 764.700 1364 769.500 1390 780.700 1406 786.500 1433 797.500 1447 802.500 1484 817.500 1508 826.700 1545 842.500 1566 849.700 1611 867.800"/>
          <path d="M46 603.500H204M204 604.500H362M362 605.500H434M434 606.500H463M463 607.500H506M506 608.500H535M535 609.500H549M549 610.500H578M578 611.500H593M593 612.500H607M607 613.500H621M621 614.500H636M636 615.500H648L691 618.700 713 621.500 762 626 811 633.500 848 638.200 889 645 917 650.700 932 652.500 970 660.700 991 666 1011 669.700 1032 675.700 1048 678.700 1105 694.700 1130 702.500 1175 716.700 1189 720 1219 730.700 1232 734 1280 750.600 1298 757.500 1321 766.700 1349 776 1364 780.500 1378 786.700 1406 796.500 1421 802.700 1435 807 1449 813.700 1466 818.700 1478 824.500 1494 829.700 1508 836 1537 845.500 1549 851.500 1566 856.500 1580 862.500 1594 867.800"/>
        </g>
        <g class="lab">
          <text x="915" y="151" textLength="113">imp3p.CIR RLL=25...75</text>
          <text x="17" y="157">1.032</text><text x="17" y="237">1.000</text><text x="17" y="501">0.894</text>
          <text x="46" y="508">1.621m</text><text x="46" y="520" textLength="34">v(l) (V)</text><text x="1875" y="508">73.474m</text>
          <text x="17" y="532">4.174</text><text x="17" y="560">4.000</text><text x="17" y="718">3.000</text><text x="17" y="871">2.035</text>
          <text x="46" y="878">1.621m</text><text x="46" y="890" class="green">4*v(l)^2</text><text x="1869" y="878">130.200m</text>
          <text x="903" y="902" textLength="32">F (Hz)</text>
        </g>
        <path stroke="#060" d="M46 890.500h37"/>
        <rect x="273.500" y="258.500" width="140" height="18" fill="#fff" stroke="#969696"/>
        <text x="276" y="272" class="tip" textLength="133">10.471m,997.456m RLL=75</text>
      </svg>
    </div>
  </section>
  <div class="tabs"><div class="tab one">imp3p.CIR</div><div class="tab active">AC Analysis</div></div>
</main>

<section class="output"><div class="rail"><svg viewBox="0 0 15 63"><path stroke="#111" stroke-width="1.500" d="M5.500 3.500l5 5M10.500 3.500l-5 5"/><path fill="none" stroke="#a0a0a0" d="M6.500 14v47M9.500 14v47.500H4"/></svg></div><div class="log"></div></section>

<footer class="status"><span class="st1">Scale Mode</span><span class="st2">Double-click in the window for more options.</span><span class="st3">10.471m , 997.456m RLL=75</span></footer>

<div class="taskbar">
  <svg class="launch" viewBox="0 0 44 44"><g fill="#fcfcfc"><circle cx="14" cy="14.200" r="6.200"/><circle cx="30" cy="14.200" r="6.200"/><circle cx="14" cy="29" r="6.200"/><circle cx="30" cy="29" r="6.200"/></g></svg>
  <div class="task open"><svg viewBox="0 0 22 22"><path fill="none" stroke="url(#flame)" stroke-width="1.800" d="M1 6V1.500h7l2 3.500h9v3M1 6v14h20V9H9L7 11H1"/></svg></div>
  <div class="task open"><svg viewBox="0 0 22 22"><rect x="1" y="2" width="20" height="18" rx="2" fill="none" stroke="url(#sea)" stroke-width="1.700"/><path fill="none" stroke="url(#sea)" stroke-width="1.700" d="M4 8l4 3.500L4 15M11 15.100l7-.1"/></svg></div>
  <div class="task"><svg viewBox="0 0 22 22"><use href="#bag"/></svg></div>
  <div class="task open"><svg viewBox="0 0 22 22"><path fill="none" stroke="url(#flame)" stroke-width="1.700" d="M4 2Q0 8 1.500 13 4 20.500 11 20.500T20.500 13Q21.500 8 18.500 2l-1 5-2-3q1 4 1 8-1 4-5 4-4.500 0-5-4l3 .5 2-1.500-3-1 1-3-3 .5Q4.500 6 4 2z"/></svg></div>
  <div class="task"><svg viewBox="0 0 22 22"><path fill="#1b8fd6" d="M15 1l5.500 2.500v15L15 21l-9-8-3.500 3L1 15l4-4-4-4 1.500-1L6 9zM15 7l-5.500 4 5.500 4z"/><path fill="#3fb3f5" d="M15 1l5.500 2.500v15L15 21z"/></svg></div>
  <div class="task open"><svg viewBox="0 0 22 22"><path fill="none" stroke="url(#rose)" stroke-width="1.500" d="M2.500 1.500h17v19h-17z"/><path fill="none" stroke="#f04468" stroke-width="1.300" d="M3 19Q11 12 10 4q-1-2 0 0 2 9 9 12-7-2-16 3"/></svg></div>
  <div class="task open"><svg viewBox="0 0 22 22"><path fill="none" stroke="url(#flame)" stroke-width="1.800" d="M2 2h18v18H2z"/><path fill="none" stroke="url(#flame)" stroke-width="1.800" d="M2 12l4-3 6 6 3-2.500 5 .1"/><circle cx="15" cy="6.500" r="1.700" fill="#ff8a08"/></svg></div>
  <div class="task open current"><svg viewBox="0 0 20 20"><use href="#app"/></svg></div>
  <div class="tray">
    <svg class="kbd" viewBox="0 0 28 44"><rect x="2" y="13" width="24" height="18" rx="2.500" fill="none" stroke="#fcfcfc" stroke-width="2"/><path stroke="#fcfcfc" stroke-width="2" d="M5 27h18"/></svg>
    <div class="pager"><i></i><b></b></div>
    <svg class="ti" viewBox="0 0 22 22"><path fill="none" stroke="url(#rose)" stroke-width="1.500" d="M11 1q4 2.500 8 2 1 13-8 18Q2 16 3 3q4 .5 8-2z"/><circle cx="11" cy="10.500" r="4.800" fill="none" stroke="#ef6572" stroke-width="1.400"/><path fill="none" stroke="#ef5f78" stroke-width="1.400" d="M8.500 10.500l2 2 3-3.500"/></svg>
    <svg class="ti" viewBox="0 0 22 22"><path fill="#3daee9" d="M3 3h3v8H3zM7 3h1v1H7zM7 5h1v6H7zM9 3h2v8H9z"/><path fill="#fcfcfc" d="M12 5h7v13h-3v2l-2-2H9v-6h3z"/></svg>
    <svg class="ti" viewBox="0 0 22 22"><use href="#bag"/></svg>
    <svg class="ti" viewBox="0 0 22 22"><rect x="5" y="5" width="12" height="13.500" rx="1" fill="none" stroke="#fcfcfc" stroke-width="2"/><path fill="#fcfcfc" d="M7 4h2q2-4 4 0h2v3H7z"/></svg>
    <svg class="ti" viewBox="0 0 22 22"><path fill="none" stroke="#ef6a42" stroke-width="1.600" d="M8.500 15v-2.500q-5-4-1-8 3.500-2.500 7 0 4 4-1 8V15z"/><path stroke="#f0447c" stroke-width="1.300" d="M2 1l3 3M20 1l-3 3M2 15l3-2M20 15l-3-2"/><path fill="#8a54c8" d="M8.500 16.500h5V19l-2 1.500-3-1.500z"/></svg>
    <svg class="ti" viewBox="0 0 22 22"><path fill="#fcfcfc" d="M2 8h3l4-4v13l-4-4H2q-2-2 0-5z"/><path fill="none" stroke="#fcfcfc" stroke-width="1.600" d="M11 7q2 3.500 0 7M13.500 5.500q3 5 0 10"/><path fill="none" stroke="#9a9c98" stroke-width="1.600" d="M16 4q4.500 6.500 0 13"/></svg>
    <svg class="ti" viewBox="0 0 22 22"><rect x="4" y="1" width="14" height="20" rx="7" fill="#fcfcfc"/><path fill="none" stroke="#333830" stroke-width="1.300" d="M7.500 7.500l7 7-3.500 3V4.500l3.500 3-7 7"/></svg>
    <span class="lang">us</span>
    <svg class="ti" viewBox="0 0 22 22"><path fill="#7d817b" d="M0 6.500q11-8 22 0l-2.500 3q-8.500-5-17 0z"/><path fill="#fcfcfc" d="M2.500 8.500q8.500-6 17 0L11 18.500z"/></svg>
    <svg class="up" viewBox="0 0 14 22"><path fill="#fcfcfc" d="M1 14h12L7 8z"/></svg>
    <div class="clock"><span class="time">18:15</span><span class="date">02.03.2023</span></div>
  </div>
</div>
</body>
</html>
```
FILE: styles.css
```css
* { box-sizing: border-box; }
body { margin: 0; width: 1920px; height: 1080px; overflow: hidden; display: flex; flex-direction: column; background: #f4f4f4; font: 11px "Noto Sans", sans-serif; color: #1a1a1a; }
h1, h2, ul { margin: 0; padding: 0; font-weight: 400; list-style: none; }
svg { display: block; flex: none; }
.sprite { width: 0; height: 0; overflow: hidden; }
.app-num { font: bold 10px "Liberation Sans Narrow", "Liberation Sans", sans-serif; fill: #a8200c; letter-spacing: -.5px; }
.t-fx { font: italic bold 12px "Liberation Serif", serif; }
.t-T { font: bold 19px "Liberation Serif", serif; stroke: #000; stroke-width: .5px; }
.t-m { font: italic bold 12px "Liberation Serif", serif; }
.t-f { font: italic bold 9px "Liberation Serif", serif; }
.t-n { font: bold 8px "Liberation Serif", serif; }
.t-z { font: bold 6px "Liberation Sans", sans-serif; }
.t-A { font: bold 17px "Liberation Serif", serif; fill: #2f5190; }
.t-B { font: italic bold 16px "Liberation Sans", sans-serif; fill: #4a7cc4; }

.titlebar { height: 29px; flex: none; display: flex; align-items: center; background: linear-gradient(#3e434c, #31363b); color: #f4f5f5; padding: 0 8px; }
.titlebar h1 { flex: 1; font-size: 13px; line-height: 26px; margin-top: -2px; text-align: center; letter-spacing: 0; padding-left: 27px; }
.t-app { width: 20px; height: 20px; margin-top: -1px; }
.t-pin { width: 12px; height: 12px; margin: -2px 0 0 9px; }
.t-ctl { width: 70px; height: 20px; margin: -1px -2px 0 0; }

.menubar { height: 20px; flex: none; display: flex; background: #fff; border-bottom: 1px solid #a0a0a0; }
.doc { width: 16px; height: 16px; margin-top: 1px; }
.menubar ul { display: flex; flex: 1; padding-left: 6px; line-height: 22px; letter-spacing: -.18px; }
.menubar li { white-space: nowrap; flex: none; }
.menubar u { text-underline-offset: 2px; }
.m1 { width: 31px; } .m2 { width: 32px; } .m3 { width: 71px; } .m4 { width: 58px; }
.m5 { width: 51px; } .m6 { width: 26px; } .m7 { width: 43px; } .m8 { width: 75px; }
.mdi-ctl { padding: 3px 2px 0 0; }
.mdi-ctl svg { width: 42px; height: 12px; }

.toolbar { display: flex; flex: none; }
.main { height: 32px; background: #fff; border-bottom: 2px solid #a0a0a0; }
.seg { display: flex; align-items: center; border-right: 1px solid #a0a0a0; margin-top: 1px; }
.s1 { width: 152px; } .s2 { width: 176px; } .s3 { width: 447px; } .s4 { width: 158px; } .s5 { width: 84px; } .s6 { width: 186px; }
.grip { width: 3px; height: 20px; margin: 0 4px; background: repeating-linear-gradient(#222 0 1px, transparent 1px 2px); }
.s1 .grip { margin-right: 3px; }
.i { width: 23px; height: 23px; border: 1px solid transparent; padding: 2px 3px 3px 2px; border-radius: 2px; }
.i.on { background: #fff; border-color: #1f6fe5; padding: 3px 2px 2px 3px; }
.c { width: 11px; height: 16px; }
.sep { width: 5px; height: 19px; background: linear-gradient(#a8a8a8, #a8a8a8) 2px 0 / 1px 100% no-repeat; }

.mdi { height: 859px; flex: none; display: flex; flex-direction: column; background: #f4f4f4; border-left: 1px solid #a0a0a0; border-bottom: 2px solid #fff; }
.window { height: 833px; margin-right: 1px; background: #fff; border: solid #b0b0b0; border-width: 0 1px 1px 1px; border-radius: 0 2px 2px 2px; padding: 2px 3px 3px 2px; display: flex; flex-direction: column; }
.window::before { content: ""; height: 1px; flex: none; background: #e3e3e3; }
.caption { margin: 3px 0 0 4px; height: 18px; flex: none; background: #3399ff; display: flex; align-items: flex-start; padding-left: 2px; }
.caption h2 { flex: 1; font-size: 11px; letter-spacing: .45px; line-height: 20px; padding-left: 2px; color: #0c1c30; }
.cap-ctl { width: 48px; height: 14px; margin-top: 2px; }
.local { height: 30px; margin-left: 4px; padding-left: 3px; background: #f4f4f4; align-items: center; }
.plots { flex: 1; margin-left: 4px; border: solid #a0a0a0; border-width: 2px 0 0 2px; overflow: hidden; }
.chart { width: 1905px; height: 773px; }
.axes path { fill: none; stroke: #808080; shape-rendering: crispEdges; }
.axes .dash { stroke-dasharray: 3 3; }
.trace path { fill: none; shape-rendering: crispEdges; }
.v path { stroke: #0000ff; }
.g path { stroke: #006400; }
.lab text { font: 11px "Liberation Sans", sans-serif; fill: #1414ff; }
.lab .green { fill: #148014; }
.tip { font: 11px "Noto Sans", sans-serif; fill: #1a1a1a; }

.tabs { display: flex; align-items: flex-start; padding-left: 4px; }
.tab { text-align: center; letter-spacing: -.1px; }
.one { width: 82px; height: 19px; line-height: 23px; border-bottom: 2px solid #808080; letter-spacing: 0; }
.active { margin-left: 1px; width: 95px; height: 21px; line-height: 18px; padding-right: 2px; border: solid #707070; border-width: 0 2px 2px 0; box-shadow: -1px 0 #fff; }

.output { height: 72px; flex: none; margin-top: 1px; border-top: 1px solid #a0a0a0; border-bottom: 1px solid #a0a0a0; padding: 4px 3px 3px 0; display: flex; }
.rail svg { width: 15px; height: 63px; }
.log { flex: 1; background: #fff; height: 63px; }

.status { height: 22px; flex: none; display: flex; margin-top: 1px; border-top: 1px solid #a0a0a0; font: 15px/23px "Liberation Sans", sans-serif; letter-spacing: -.13px; color: #000; padding-top: 1px; box-shadow: 0 -1px #fff; }
.status span { height: 19px; white-space: nowrap; border-right: 1px solid #a0a0a0; }
.st1 { width: 175px; padding-left: 3px; }
.st2 { width: 1431px; padding-left: 4px; line-height: 19px; }
.st3 { width: 210px; padding-left: 6px; }

.taskbar { height: 44px; flex: none; display: flex; background: linear-gradient(90deg, #2e3333, #343930); color: #fcfcfc; }
.launch { width: 44px; height: 44px; }
.task { width: 60px; height: 44px; padding: 11px 0 0 19px; border-radius: 2px; }
.task svg { width: 22px; height: 22px; }
.open { background: linear-gradient(#858888, #858888) 2px 37px / 56px 4px no-repeat; }
.current { background-image: linear-gradient(90deg, transparent 25px, #2f83b3 25px 31px, transparent 31px), linear-gradient(#3daee9, #3daee9); background-position: 2px 37px; background-size: 56px 4px; background-repeat: no-repeat; }
.tray { margin-left: auto; display: flex; align-items: center; padding-right: 7px; }
.kbd { width: 28px; height: 44px; }
.pager { width: 30px; height: 34px; margin: 0 6px 0 13px; display: flex; flex-direction: column; gap: 2px; }
.pager i { height: 16px; background: #a6d4ee; border: 1px solid #fff; border-radius: 4px; }
.pager b { height: 16px; background: #4a4e4d; border: 1px solid #888; }
.ti { width: 22px; height: 22px; margin: 0 4px; }
.lang { width: 30px; font-size: 18.500px; text-align: center; }
.up { width: 14px; height: 22px; margin: 0 10px 0 6px; }
.clock { width: 84px; display: flex; flex-direction: column; align-items: center; margin-left: 1px; }
.time { font-size: 19.500px; line-height: 20px; }
.date { font-size: 16px; line-height: 17px; }
```
